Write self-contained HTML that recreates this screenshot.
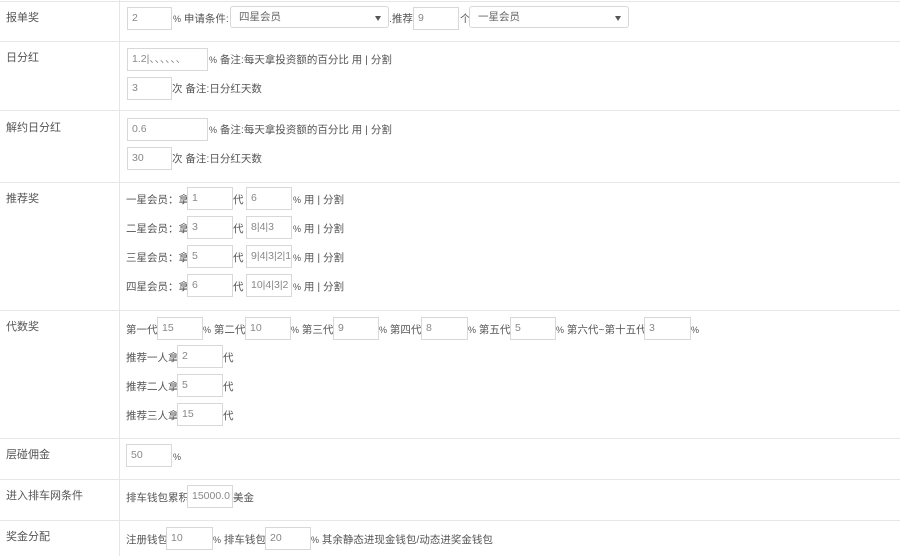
<!DOCTYPE html>
<html><head><meta charset="utf-8"><style>
*{margin:0;padding:0;box-sizing:border-box}
body{width:900px;height:556px;background:#fff;position:relative;overflow:hidden;font-family:"Liberation Sans","Noto Sans CJK SC",sans-serif;font-size:11px;color:#555}
.h{position:absolute;left:0;width:900px;height:1px;background:#e6e6e6}
.v{position:absolute;left:119px;top:0;width:1px;height:556px;background:#e6e6e6}
.l{position:absolute;left:6px;font-size:11px;color:#555}
.i{position:absolute;height:23px;border:1px solid #d8d8d8;color:#888;font-size:10.5px;padding:3px 0 0 4px;line-height:14px;white-space:nowrap;overflow:hidden;background:#fff}
.t{position:absolute;line-height:25px;height:23px;white-space:nowrap;font-size:10.5px;color:#555}
.s{position:absolute;height:22px;border:1px solid #d8d8d8;border-radius:3px;color:#666;font-size:10.5px;padding:3px 0 0 8px;line-height:14px}
.s:after{content:"";position:absolute;right:7px;top:9px;border-left:3px solid transparent;border-right:3px solid transparent;border-top:5px solid #555}
.p{font-size:9px}
</style></head><body>
<div class="h" style="top:1px"></div>
<div class="h" style="top:41px"></div>
<div class="h" style="top:110px"></div>
<div class="h" style="top:182px"></div>
<div class="h" style="top:310px"></div>
<div class="h" style="top:438px"></div>
<div class="h" style="top:479px"></div>
<div class="h" style="top:520px"></div>
<div class="v"></div>

<div class="l" style="top:9px">报单奖</div>
<div class="i" style="left:127px;top:7px;width:45px">2</div>
<div class="t" style="left:173px;top:7px"><span class="p">%</span> 申请条件:</div>
<div class="s" style="left:230px;top:6px;width:159px">四星会员</div>
<div class="t" style="left:389px;top:7px">.推荐</div>
<div class="i" style="left:413px;top:7px;width:46px">9</div>
<div class="t" style="left:460px;top:7px">个</div>
<div class="s" style="left:469px;top:6px;width:160px">一星会员</div>

<div class="l" style="top:49px">日分红</div>
<div class="i" style="left:127px;top:48px;width:81px">1.2|、、、、、、</div>
<div class="t" style="left:209px;top:48px"><span class="p">%</span> 备注:每天拿投资额的百分比 用 | 分割</div>
<div class="i" style="left:127px;top:77px;width:45px">3</div>
<div class="t" style="left:172px;top:77px">次 备注:日分红天数</div>

<div class="l" style="top:119px">解约日分红</div>
<div class="i" style="left:127px;top:118px;width:81px">0.6</div>
<div class="t" style="left:209px;top:118px"><span class="p">%</span> 备注:每天拿投资额的百分比 用 | 分割</div>
<div class="i" style="left:127px;top:147px;width:45px">30</div>
<div class="t" style="left:172px;top:147px">次 备注:日分红天数</div>

<div class="l" style="top:190px">推荐奖</div>
<div class="t" style="left:126px;top:188px">一星会员：拿</div><div class="i" style="left:187px;top:187px;width:46px">1</div><div class="t" style="left:233px;top:188px">代</div><div class="i" style="left:246px;top:187px;width:46px">6</div><div class="t" style="left:293px;top:188px"><span class="p">%</span> 用 | 分割</div>
<div class="t" style="left:126px;top:217px">二星会员：拿</div><div class="i" style="left:187px;top:216px;width:46px">3</div><div class="t" style="left:233px;top:217px">代</div><div class="i" style="left:246px;top:216px;width:46px">8|4|3</div><div class="t" style="left:293px;top:217px"><span class="p">%</span> 用 | 分割</div>
<div class="t" style="left:126px;top:246px">三星会员：拿</div><div class="i" style="left:187px;top:245px;width:46px">5</div><div class="t" style="left:233px;top:246px">代</div><div class="i" style="left:246px;top:245px;width:46px">9|4|3|2|1</div><div class="t" style="left:293px;top:246px"><span class="p">%</span> 用 | 分割</div>
<div class="t" style="left:126px;top:275px">四星会员：拿</div><div class="i" style="left:187px;top:274px;width:46px">6</div><div class="t" style="left:233px;top:275px">代</div><div class="i" style="left:246px;top:274px;width:46px">10|4|3|2</div><div class="t" style="left:293px;top:275px"><span class="p">%</span> 用 | 分割</div>

<div class="l" style="top:318px">代数奖</div>
<div class="t" style="left:126px;top:318px">第一代</div><div class="i" style="left:157px;top:317px;width:46px">15</div>
<div class="t" style="left:203px;top:318px"><span class="p">%</span> 第二代</div><div class="i" style="left:245px;top:317px;width:46px">10</div>
<div class="t" style="left:291px;top:318px"><span class="p">%</span> 第三代</div><div class="i" style="left:333px;top:317px;width:46px">9</div>
<div class="t" style="left:379px;top:318px"><span class="p">%</span> 第四代</div><div class="i" style="left:421px;top:317px;width:47px">8</div>
<div class="t" style="left:468px;top:318px"><span class="p">%</span> 第五代</div><div class="i" style="left:510px;top:317px;width:46px">5</div>
<div class="t" style="left:556px;top:318px"><span class="p">%</span> 第六代~第十五代</div><div class="i" style="left:644px;top:317px;width:47px">3</div>
<div class="t" style="left:691px;top:318px"><span class="p">%</span></div>
<div class="t" style="left:126px;top:346px">推荐一人拿</div><div class="i" style="left:177px;top:345px;width:46px">2</div><div class="t" style="left:223px;top:346px">代</div>
<div class="t" style="left:126px;top:375px">推荐二人拿</div><div class="i" style="left:177px;top:374px;width:46px">5</div><div class="t" style="left:223px;top:375px">代</div>
<div class="t" style="left:126px;top:404px">推荐三人拿</div><div class="i" style="left:177px;top:403px;width:46px">15</div><div class="t" style="left:223px;top:404px">代</div>

<div class="l" style="top:446px">层碰佣金</div>
<div class="i" style="left:126px;top:444px;width:46px">50</div>
<div class="t" style="left:173px;top:445px"><span class="p">%</span></div>

<div class="l" style="top:487px">进入排车网条件</div>
<div class="t" style="left:126px;top:486px">排车钱包累积</div><div class="i" style="left:187px;top:485px;width:46px">15000.0</div><div class="t" style="left:233px;top:486px">美金</div>

<div class="l" style="top:528px">奖金分配</div>
<div class="t" style="left:126px;top:528px">注册钱包</div><div class="i" style="left:166px;top:527px;width:47px">10</div>
<div class="t" style="left:213px;top:528px"><span class="p">%</span> 排车钱包</div><div class="i" style="left:265px;top:527px;width:46px">20</div>
<div class="t" style="left:311px;top:528px"><span class="p">%</span> 其余静态进现金钱包/动态进奖金钱包</div>
</body></html>
